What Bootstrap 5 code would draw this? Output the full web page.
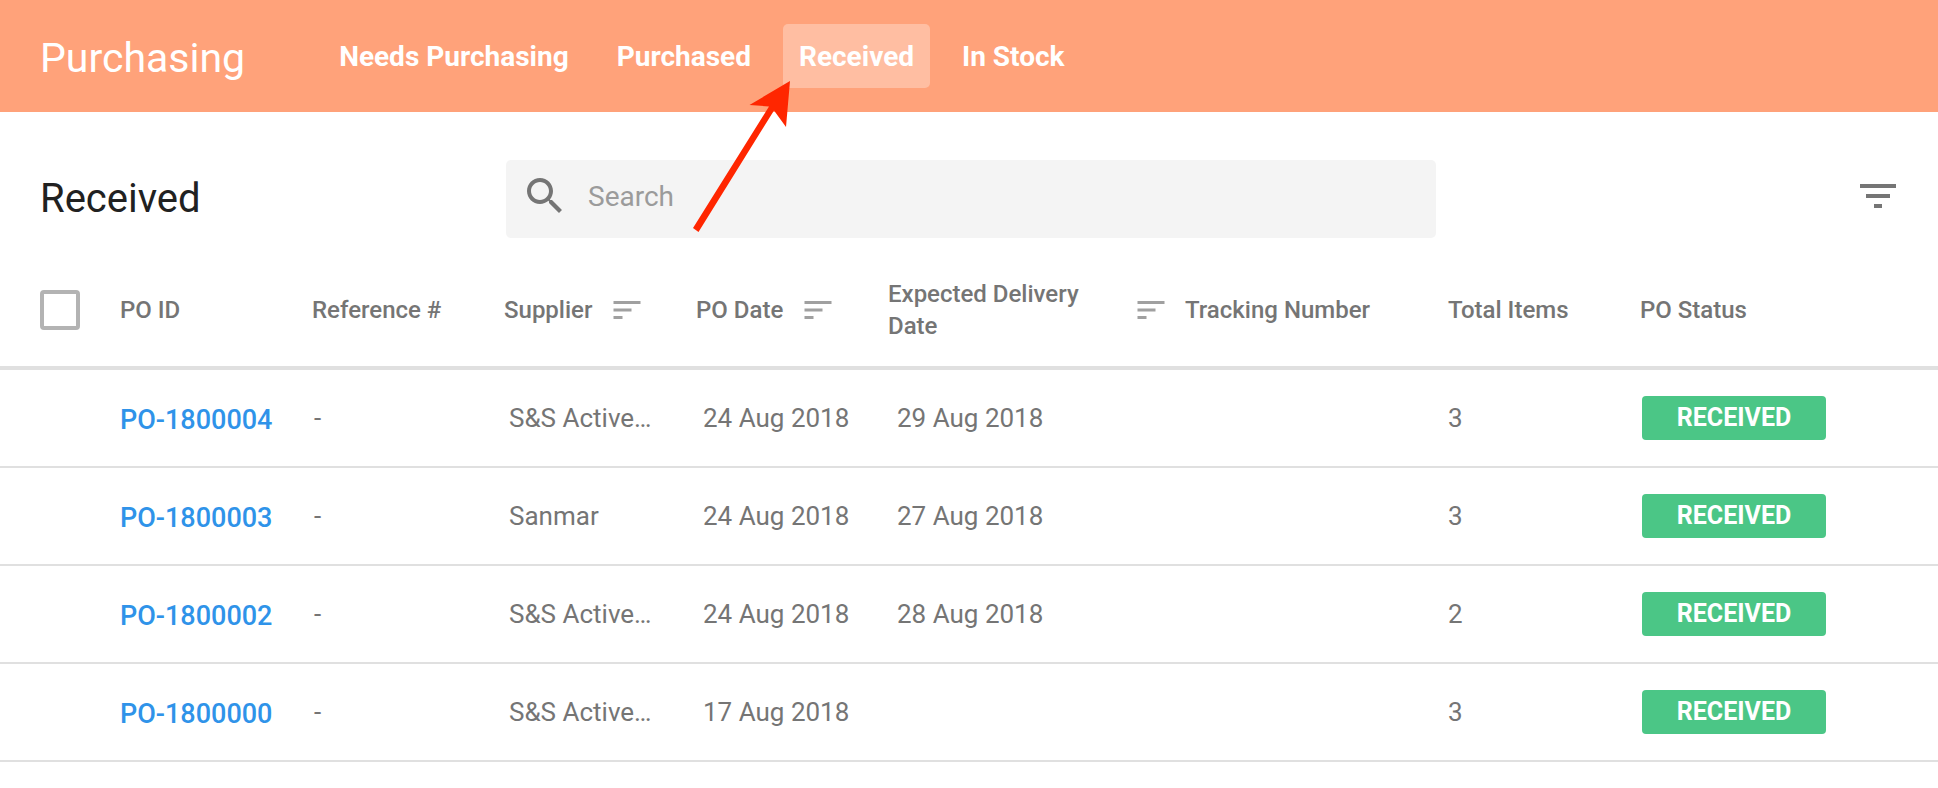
<!DOCTYPE html>
<html lang="en">
<head>
<meta charset="utf-8">
<meta name="viewport" content="width=device-width, initial-scale=1">
<title>Purchasing – Received</title>
<link rel="stylesheet" href="https://cdn.jsdelivr.net/npm/bootstrap@5.3.0/dist/css/bootstrap.min.css">
<style>
  body { font-family: Roboto, "Liberation Sans", sans-serif; font-size: 26px; color: #757575; background: #fff; }

  .topbar { background: #ffa27a; height: 112px; padding: 0 40px; }
  .topbar .brand-title { font-size: 41px; line-height: 48px; margin: 4px 78px 0 0; font-weight: 400; color: #fff; }
  .topbar .nav { gap: 16px; }
  .topbar .nav-link { position: relative; padding: 17px 16px 15px; border-radius: 5px; font-size: 28px; line-height: 32px; font-weight: 700; color: #fff; }
  .topbar .nav-link.active { background: rgba(255, 255, 255, .3); }
  .pointer-arrow { position: absolute; left: -92px; top: 55px; z-index: 2; pointer-events: none; }

  .toolbar { display: grid; grid-template-columns: 466fr 930fr 462fr; padding: 48px 40px 0; }
  .toolbar h1 { font-size: 40px; line-height: 48px; color: #212121; font-weight: 400; }
  .search-box { background: #f4f4f4; border-radius: 5px; height: 78px; padding: 0 16px 6px 15px; gap: 19px; }
  .search-box .form-control { border: 0; background: transparent; box-shadow: none; padding: 2px 0 0; font-size: 28px; line-height: 36px; color: #757575; }
  .search-box .form-control::placeholder { color: #9b9b9b; opacity: 1; }

  .po-table { table-layout: fixed; width: 100%; margin: 0; border-collapse: separate; border-spacing: 0; }
  .po-table th, .po-table td { padding: 0; vertical-align: middle; }
  .po-table th { padding: 40px 0 24px; height: 132px; font-size: 24px; line-height: 32px; font-weight: 500; border-bottom: 4px solid #e0e0e0; }
  .po-table td { height: 98px; border-bottom: 2px solid #e0e0e0; line-height: 32px; }
  .po-table .form-check-input { display: block; width: 40px; height: 40px; margin: 0 0 0 40px; border: 4px solid #b3b3b3; border-radius: 4px; }
  .po-table a { display: block; padding-top: 4px; font-size: 27px; font-weight: 500; color: #2f93e9; text-decoration: none; }
  .po-table .inset-ref { padding-left: 2px; }
  .po-table .inset-name { padding-left: 5px; }
  .po-table .inset-date { padding-left: 7px; }
  .po-table .inset-delivery { padding-left: 9px; }
  .sort-label { display: flex; align-items: center; gap: 17px; }
  .sort-btn { border: 0; background: none; padding: 0; color: #a0a0a0; line-height: 0; flex: none; }
  .delivery-label { width: 228px; }
  .status-tag { display: block; width: 184px; margin-left: 2px; padding: 6px 0; border-radius: 4px; background: #4bc686; color: #fff; font-size: 25px; line-height: 32px; font-weight: 700; text-align: center; }
</style>
</head>
<body>
<svg class="d-none" aria-hidden="true">
  <symbol id="sort" viewBox="0 0 24 24"><path fill="currentColor" d="M3 18h6v-2H3v2zM3 6v2h18V6H3zm0 7h12v-2H3v2z"/></symbol>
</svg>

<header class="topbar d-flex align-items-center">
  <div class="brand-title">Purchasing</div>
  <nav class="nav" aria-label="Purchasing">
    <a class="nav-link" href="#">Needs Purchasing</a>
    <a class="nav-link" href="#">Purchased</a>
    <a class="nav-link active" href="#" aria-current="page">Received
      <svg class="pointer-arrow" width="104" height="156" viewBox="0 0 104 156" aria-hidden="true">
        <path fill="#ff2600" d="M99 2 58.500 26 78 27.500 2 149 7.500 153 83 31.500 95 48z"/>
      </svg>
    </a>
    <a class="nav-link" href="#">In Stock</a>
  </nav>
</header>

<main>
  <div class="toolbar align-items-center">
    <h1 class="m-0">Received</h1>
    <div class="search-box d-flex align-items-center">
      <svg class="flex-shrink-0" width="48" height="48" viewBox="0 0 24 24" aria-hidden="true"><path fill="#757575" d="M15.500 14h-.79l-.28-.27C15.410 12.590 16 11.110 16 9.500 16 5.910 13.090 3 9.500 3S3 5.910 3 9.500 5.910 16 9.500 16c1.610 0 3.090-.59 4.230-1.570l.27.28v.79l5 4.990L20.490 19l-4.990-5zm-6 0C7.010 14 5 11.990 5 9.500S7.010 5 9.500 5 14 7.010 14 9.500 11.990 14 9.500 14z"/></svg>
      <input class="form-control" type="text" placeholder="Search" aria-label="Search">
    </div>
    <button class="btn border-0 p-0 ms-auto lh-1" type="button" aria-label="Filter">
      <svg class="d-block" width="38" height="30" viewBox="0 0 38 30"><path fill="#757575" d="M0 0h36v4H0zM6 10h24v4H6zM14 20h8v4h-8z"/></svg>
    </button>
  </div>

  <table class="po-table">
    <colgroup>
      <col style="width:120px"><col style="width:192px"><col style="width:192px"><col style="width:192px"><col style="width:192px"><col style="width:297px"><col style="width:263px"><col style="width:192px"><col style="width:298px">
    </colgroup>
    <thead>
      <tr>
        <th><input class="form-check-input" type="checkbox" aria-label="Select all"></th>
        <th scope="col">PO ID</th>
        <th scope="col">Reference #</th>
        <th scope="col"><div class="sort-label">Supplier<button class="sort-btn" type="button" aria-label="Sort by supplier"><svg width="36" height="36"><use href="#sort"/></svg></button></div></th>
        <th scope="col"><div class="sort-label">PO Date<button class="sort-btn" type="button" aria-label="Sort by PO date"><svg width="36" height="36"><use href="#sort"/></svg></button></div></th>
        <th scope="col"><div class="sort-label"><span class="delivery-label">Expected Delivery Date</span><button class="sort-btn" type="button" aria-label="Sort by expected delivery date"><svg width="36" height="36"><use href="#sort"/></svg></button></div></th>
        <th scope="col">Tracking Number</th>
        <th scope="col">Total Items</th>
        <th scope="col">PO Status</th>
      </tr>
    </thead>
    <tbody>
      <tr><td></td><td><a href="#">PO-1800004</a></td><td class="inset-ref">-</td><td class="inset-name">S&amp;S Active…</td><td class="inset-date">24 Aug 2018</td><td class="inset-delivery">29 Aug 2018</td><td></td><td>3</td><td><span class="status-tag">RECEIVED</span></td></tr>
      <tr><td></td><td><a href="#">PO-1800003</a></td><td class="inset-ref">-</td><td class="inset-name">Sanmar</td><td class="inset-date">24 Aug 2018</td><td class="inset-delivery">27 Aug 2018</td><td></td><td>3</td><td><span class="status-tag">RECEIVED</span></td></tr>
      <tr><td></td><td><a href="#">PO-1800002</a></td><td class="inset-ref">-</td><td class="inset-name">S&amp;S Active…</td><td class="inset-date">24 Aug 2018</td><td class="inset-delivery">28 Aug 2018</td><td></td><td>2</td><td><span class="status-tag">RECEIVED</span></td></tr>
      <tr><td></td><td><a href="#">PO-1800000</a></td><td class="inset-ref">-</td><td class="inset-name">S&amp;S Active…</td><td class="inset-date">17 Aug 2018</td><td></td><td></td><td>3</td><td><span class="status-tag">RECEIVED</span></td></tr>
    </tbody>
  </table>
</main>
<script src="https://cdn.jsdelivr.net/npm/bootstrap@5.3.0/dist/js/bootstrap.bundle.min.js"></script>
</body>
</html>
